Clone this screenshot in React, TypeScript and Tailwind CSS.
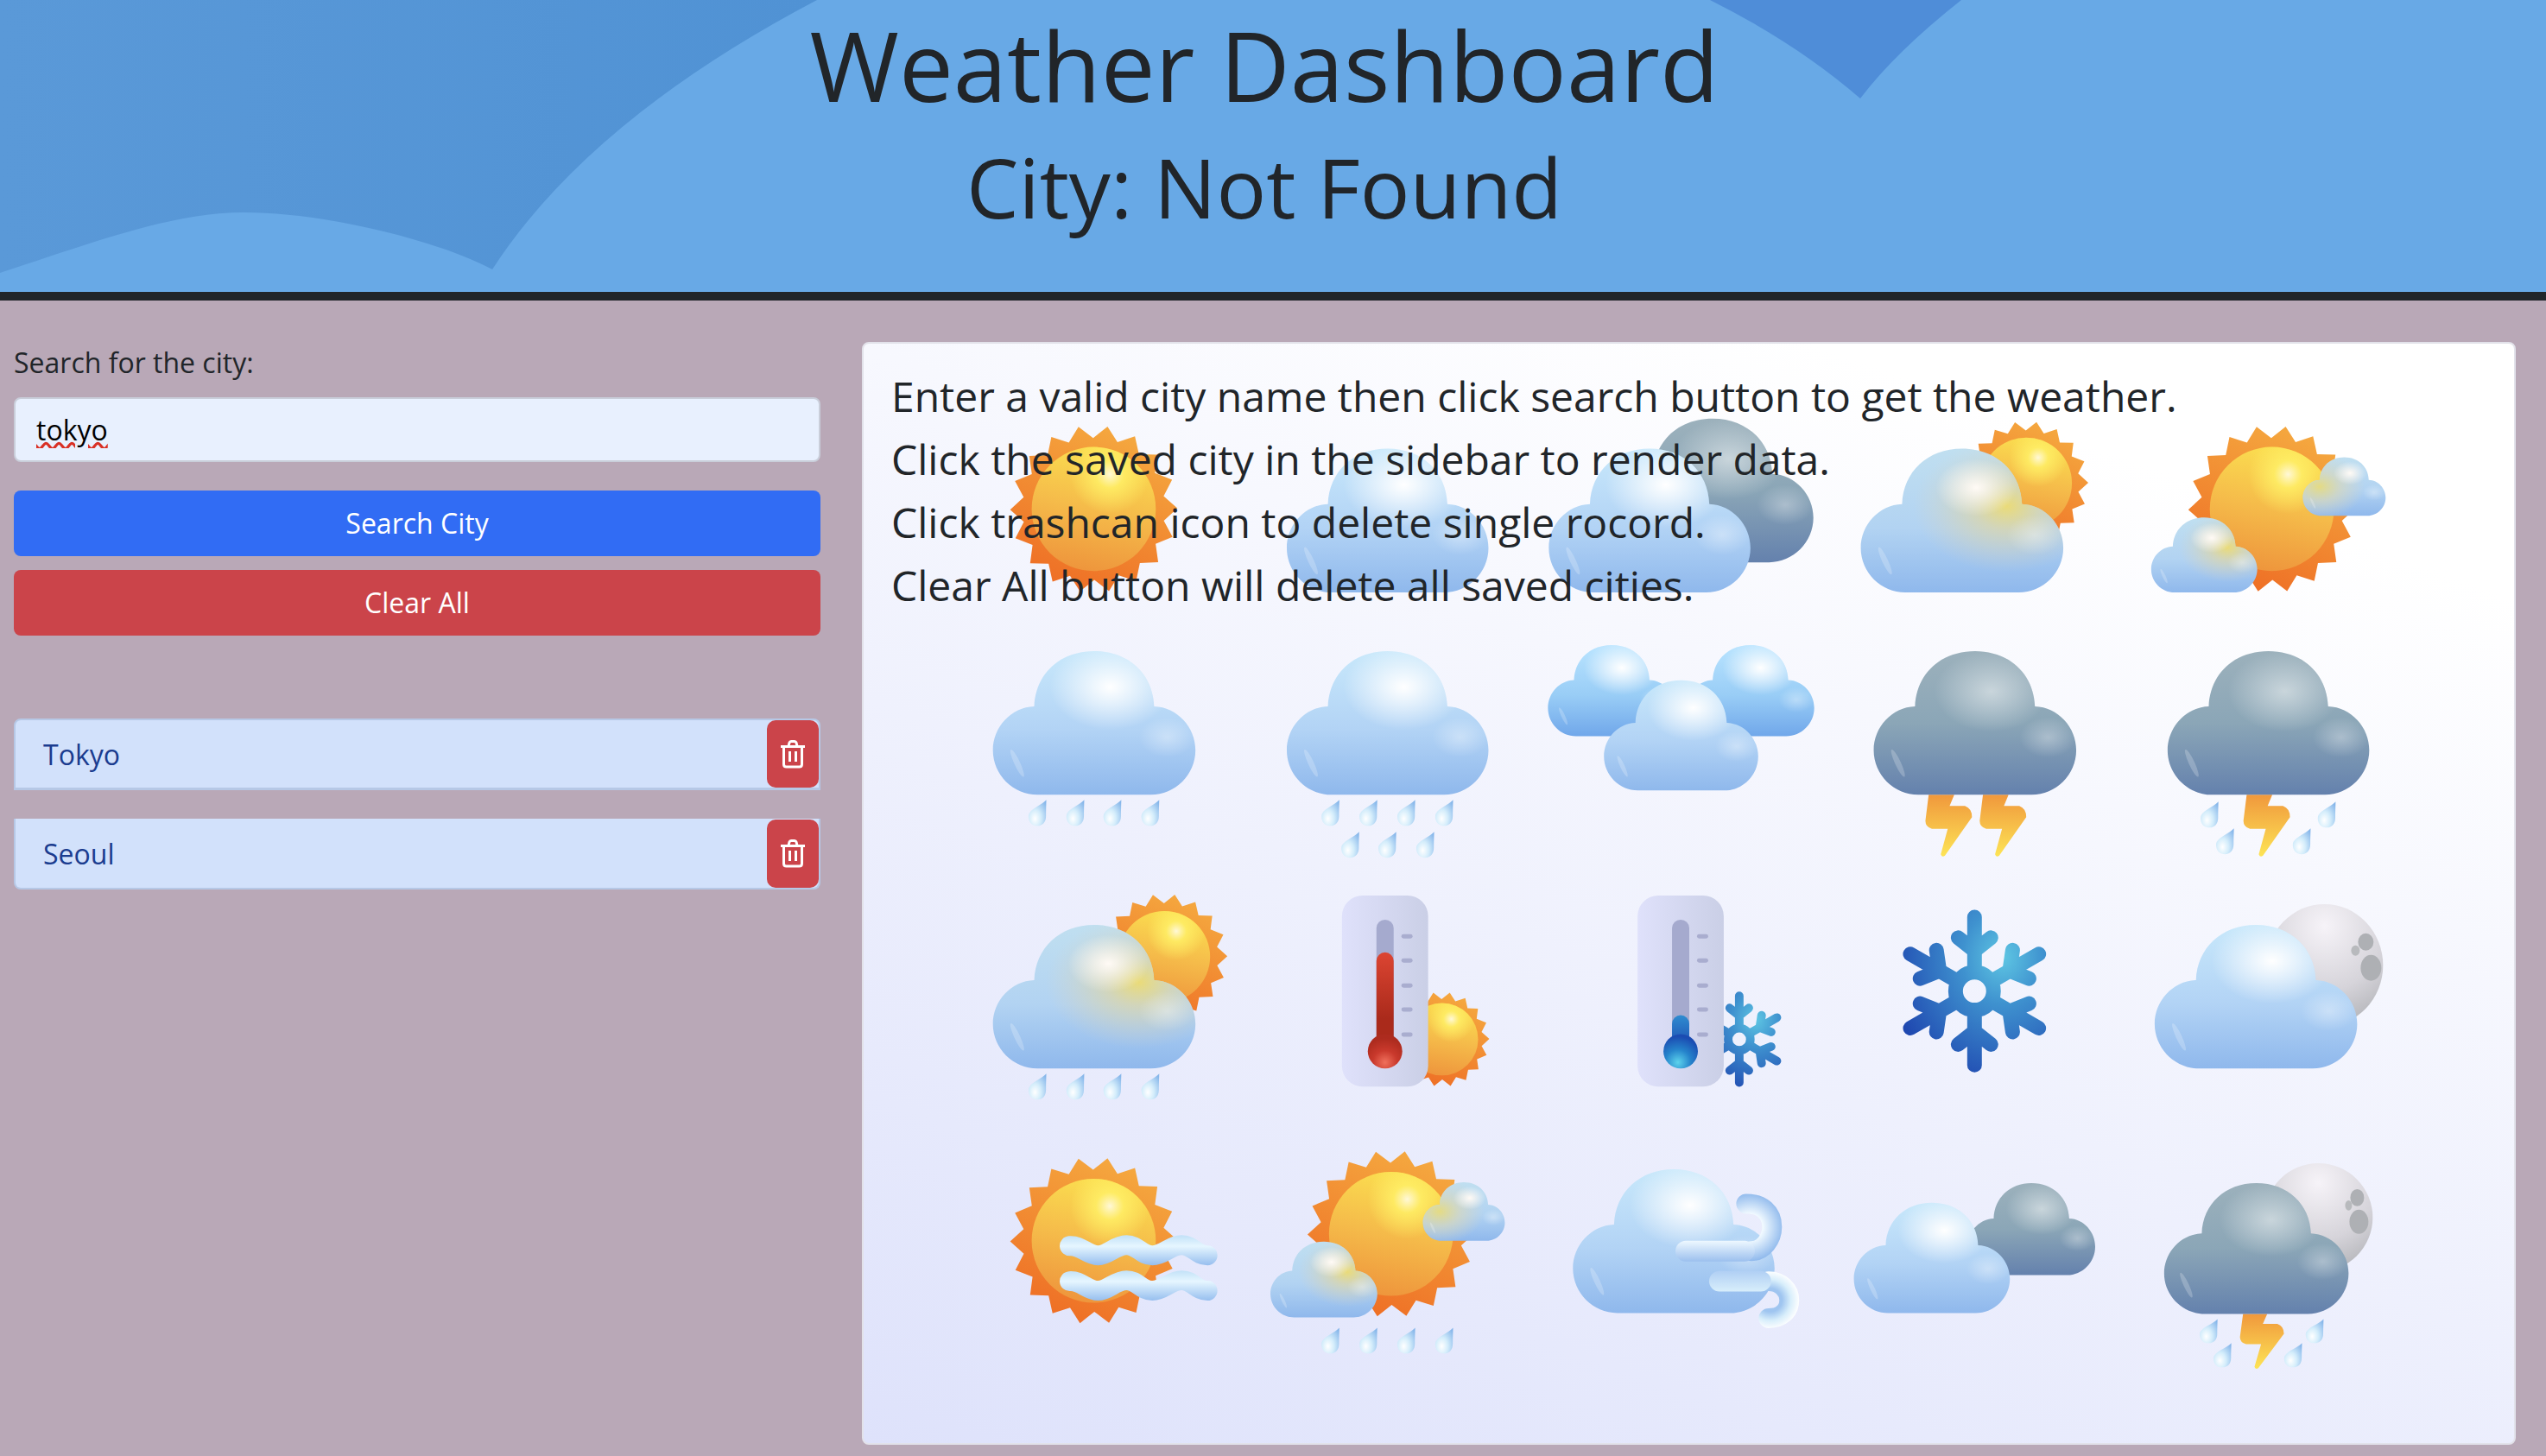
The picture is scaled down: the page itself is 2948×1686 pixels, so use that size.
import React from "react";

const CLOUD =
  "M20.4 38.5C21 16 33 0 50 0C67 0 79 16 79.6 38.5C91 39 100 53 100 69C100 86 90 100 78 100L22 100C10 100 0 86 0 69C0 53 9 39 20.4 38.5Z";
const DROP =
  "M100 0C70 22 25 30 5 52C-3 62 0 100 50 100C80 100 98 85 98 62C98 40 99 20 100 0Z";
const BOLT =
  "M7 0L62 0L52 18L85 18Q100 22 100 36L42 98Q36 102 33 96L48 55L14 55Q0 52 0 42Z";

type CloudKind = "light" | "dark" | "warm" | "warm-left" | "bright";

const Cloud = ({ x, y, w, h, kind = "light" }: { x: number; y: number; w: number; h: number; kind?: CloudKind }) => {
  const isWarm = kind === "warm" || kind === "warm-left";
  return (
    <g transform={`translate(${x} ${y}) scale(${w / 100} ${h / 100})`}>
      <path d={CLOUD} fill={`url(#cloud-${isWarm ? "warm" : kind})`} />
      {kind === "warm" && <path d={CLOUD} fill="url(#warm-tint)" />}
      {kind === "warm-left" && <path d={CLOUD} fill="url(#warm-tint-left)" />}
      <path d={CLOUD} fill={kind === "dark" ? "url(#glow-dark)" : isWarm ? "url(#glow-warm)" : "url(#glow-white)"} />
      <path d={CLOUD} fill={kind === "dark" ? "url(#lobe-dark)" : "url(#lobe-white)"} />
      <ellipse cx="12" cy="78" rx="1.5" ry="10" transform="rotate(-18 12 78)" fill="#ffffff" opacity="0.22" />
    </g>
  );
};

const Drop = ({ x, y, w = 21, h = 30 }: { x: number; y: number; w?: number; h?: number }) => (
  <g transform={`translate(${x} ${y}) scale(${w / 100} ${h / 100})`}>
    <path d={DROP} fill="url(#drop)" />
  </g>
);

const Bolt = ({ x, y, w = 54, h = 72 }: { x: number; y: number; w?: number; h?: number }) => (
  <g transform={`translate(${x} ${y}) scale(${w / 100} ${h / 100})`}>
    <path d={BOLT} fill="url(#bolt)" />
  </g>
);

// spiky ring behind the sun disc
const starPoints = (cx: number, cy: number, R: number, r: number) => {
  const pts: string[] = [];
  for (let i = 0; i < 36; i++) {
    const a = ((i * 10 - 100.5) * Math.PI) / 180;
    const rad = i % 2 === 0 ? R : r;
    pts.push(`${(cx + rad * Math.cos(a)).toFixed(1)},${(cy + rad * Math.sin(a)).toFixed(1)}`);
  }
  return pts.join(" ");
};

const Sun = ({ cx, cy, R, r }: { cx: number; cy: number; R: number; r: number }) => (
  <g>
    <polygon points={starPoints(cx, cy, R, R * 0.85)} fill="url(#sun-rays)" />
    <ellipse cx={cx} cy={cy} rx={r} ry={r} fill="url(#sun-disc)" />
    <ellipse cx={cx} cy={cy} rx={r} ry={r} fill="url(#sun-glow)" />
  </g>
);

const Flake = ({ cx, cy, s }: { cx: number; cy: number; s: number }) => {
  const R = 22 * s;
  let d = `M${cx - R} ${cy}A${R} ${R} 0 1 0 ${cx + R} ${cy}A${R} ${R} 0 1 0 ${cx - R} ${cy}`;
  for (let k = 0; k < 6; k++) {
    const a = (k * Math.PI) / 3;
    const p = (x: number, y: number) =>
      `${(cx + s * (x * Math.cos(a) - y * Math.sin(a))).toFixed(1)} ${(cy + s * (x * Math.sin(a) + y * Math.cos(a))).toFixed(1)}`;
    d += `M${p(0, -24)}L${p(0, -86)}M${p(-19, -62)}L${p(0, -47)}L${p(19, -62)}`;
  }
  return <path d={d} fill="none" stroke="url(#flake)" strokeWidth={17 * s} strokeLinecap="round" strokeLinejoin="round" />;
};

const Thermo = ({ x, hot }: { x: number; hot: boolean }) => (
  <g>
    <rect x={x} y="1037" width="100" height="222" rx="24" fill="url(#panel)" />
    <rect x={x + 40} y="1065" width="20" height="150" rx="10" fill="#a5aace" />
    {[1084, 1112, 1141, 1169, 1198].map((y) => (
      <rect key={y} x={x + 69} y={y - 2} width="13" height="5" rx="2.5" fill="#a9adcf" />
    ))}
    <rect x={x + 40} y={hot ? 1103 : 1176} width="20" height={hot ? 110 : 40} rx="10" fill={hot ? "url(#red-tube)" : "url(#blue-tube)"} />
    <ellipse cx={x + 50} cy="1218" rx="20" ry="20" fill={hot ? "url(#red-bulb)" : "url(#blue-bulb)"} />
  </g>
);

const Moon = ({ cx, cy, rx, ry }: { cx: number; cy: number; rx: number; ry: number }) => (
  <ellipse cx={cx} cy={cy} rx={rx} ry={ry} fill="url(#moon)" />
);

const Wave = ({ dy }: { dy: number }) => (
  <g transform={`translate(0 ${dy})`}>
    <path
      d="M1237 1444C1250 1443 1258 1455 1270 1455C1282 1455 1290 1443 1303 1443C1316 1443 1320 1455 1333 1455C1346 1455 1354 1443 1367 1443C1380 1443 1384 1455 1397 1455"
      fill="none"
      stroke="url(#wave)"
      strokeWidth="23"
      strokeLinecap="round"
    />
  </g>
);

const WeatherArt = () => (
  <svg className="absolute left-0 top-0 h-full w-full" viewBox="998 396 1915 1277" preserveAspectRatio="none">
    <defs>
      <linearGradient id="cloud-light" x1="0" y1="0" x2="0" y2="1">
        <stop offset="0" stopColor="#c8e8fb" />
        <stop offset="0.55" stopColor="#b2d3f5" />
        <stop offset="1" stopColor="#8fb8ec" />
      </linearGradient>
      <linearGradient id="cloud-bright" x1="0" y1="0" x2="0" y2="1">
        <stop offset="0" stopColor="#b9e4ff" />
        <stop offset="0.55" stopColor="#99cdf6" />
        <stop offset="1" stopColor="#70a7ea" />
      </linearGradient>
      <linearGradient id="cloud-dark" x1="0" y1="0" x2="0" y2="1">
        <stop offset="0" stopColor="#9cb1bc" />
        <stop offset="0.5" stopColor="#8ba6b7" />
        <stop offset="1" stopColor="#6481ad" />
      </linearGradient>
      <linearGradient id="cloud-warm" x1="0" y1="0" x2="0" y2="1">
        <stop offset="0" stopColor="#c0dff0" />
        <stop offset="0.55" stopColor="#b2d3f2" />
        <stop offset="1" stopColor="#8fb8ec" />
      </linearGradient>
      <radialGradient id="warm-tint" cx="0.72" cy="0.4" r="0.46">
        <stop offset="0" stopColor="#f7dc5a" stopOpacity="0.8" />
        <stop offset="0.35" stopColor="#dfd6a4" stopOpacity="0.7" />
        <stop offset="1" stopColor="#d8d4c4" stopOpacity="0" />
      </radialGradient>
      <radialGradient id="warm-tint-left" cx="0.2" cy="0.5" r="0.55">
        <stop offset="0" stopColor="#eddc70" stopOpacity="0.85" />
        <stop offset="0.45" stopColor="#d8d8bc" stopOpacity="0.7" />
        <stop offset="1" stopColor="#d8d8c8" stopOpacity="0" />
      </radialGradient>
      <radialGradient id="glow-white" cx="0.58" cy="0.25" r="0.3">
        <stop offset="0" stopColor="#ffffff" stopOpacity="1" />
        <stop offset="1" stopColor="#ffffff" stopOpacity="0" />
      </radialGradient>
      <radialGradient id="glow-warm" cx="0.57" cy="0.27" r="0.2">
        <stop offset="0" stopColor="#fffaf5" stopOpacity="1" />
        <stop offset="1" stopColor="#fffaf5" stopOpacity="0" />
      </radialGradient>
      <radialGradient id="glow-dark" cx="0.58" cy="0.28" r="0.28">
        <stop offset="0" stopColor="#cfdadf" stopOpacity="0.9" />
        <stop offset="1" stopColor="#cfdadf" stopOpacity="0" />
      </radialGradient>
      <radialGradient id="lobe-white" cx="0.86" cy="0.6" r="0.14">
        <stop offset="0" stopColor="#ffffff" stopOpacity="0.35" />
        <stop offset="1" stopColor="#ffffff" stopOpacity="0" />
      </radialGradient>
      <radialGradient id="lobe-dark" cx="0.86" cy="0.6" r="0.14">
        <stop offset="0" stopColor="#c6d2dc" stopOpacity="0.6" />
        <stop offset="1" stopColor="#c6d2dc" stopOpacity="0" />
      </radialGradient>
      <radialGradient id="drop" cx="0.36" cy="0.72" r="0.85">
        <stop offset="0" stopColor="#ffffff" />
        <stop offset="0.4" stopColor="#d4edfb" />
        <stop offset="1" stopColor="#86b6ea" />
      </radialGradient>
      <linearGradient id="bolt" x1="0" y1="0" x2="0" y2="1">
        <stop offset="0" stopColor="#f0983c" />
        <stop offset="1" stopColor="#fde456" />
      </linearGradient>
      <linearGradient id="sun-rays" x1="0.7" y1="0" x2="0.25" y2="1">
        <stop offset="0" stopColor="#f5aa40" />
        <stop offset="1" stopColor="#ee6c24" />
      </linearGradient>
      <linearGradient id="sun-disc" x1="0.6" y1="0" x2="0.4" y2="1">
        <stop offset="0" stopColor="#fbdf50" />
        <stop offset="0.5" stopColor="#f5bb4a" />
        <stop offset="1" stopColor="#ee953c" />
      </linearGradient>
      <radialGradient id="sun-glow" cx="0.63" cy="0.22" r="0.32">
        <stop offset="0" stopColor="#fff8d8" stopOpacity="1" />
        <stop offset="0.35" stopColor="#ffef66" stopOpacity="0.85" />
        <stop offset="1" stopColor="#ffef66" stopOpacity="0" />
      </radialGradient>
      <radialGradient id="flake" cx="0.72" cy="0.27" r="0.9">
        <stop offset="0" stopColor="#5ec6e3" />
        <stop offset="0.35" stopColor="#3f92cf" />
        <stop offset="1" stopColor="#1f48b0" />
      </radialGradient>
      <linearGradient id="panel" x1="0" y1="0" x2="1" y2="0">
        <stop offset="0" stopColor="#dfe1fb" />
        <stop offset="1" stopColor="#cacfe6" />
      </linearGradient>
      <linearGradient id="red-tube" x1="0" y1="0" x2="0" y2="1">
        <stop offset="0" stopColor="#dc4532" />
        <stop offset="0.7" stopColor="#aa2a1b" />
        <stop offset="1" stopColor="#aa2a1b" />
      </linearGradient>
      <linearGradient id="blue-tube" x1="0" y1="0" x2="0" y2="1">
        <stop offset="0" stopColor="#2f8cd0" />
        <stop offset="1" stopColor="#1d49b0" />
      </linearGradient>
      <radialGradient id="red-bulb" cx="0.5" cy="0.82" r="0.7">
        <stop offset="0" stopColor="#f0705c" />
        <stop offset="0.5" stopColor="#c9392c" />
        <stop offset="1" stopColor="#ad2b1e" />
      </radialGradient>
      <radialGradient id="blue-bulb" cx="0.42" cy="0.82" r="0.75">
        <stop offset="0" stopColor="#5cd3ec" />
        <stop offset="0.5" stopColor="#2583cb" />
        <stop offset="1" stopColor="#1b4cb2" />
      </radialGradient>
      <radialGradient id="moon" cx="0.5" cy="0.18" r="0.95">
        <stop offset="0" stopColor="#f6f3f8" />
        <stop offset="0.55" stopColor="#d6d4da" />
        <stop offset="1" stopColor="#a8aaae" />
      </radialGradient>
      <linearGradient id="wave" gradientUnits="userSpaceOnUse" x1="0" y1="1432" x2="0" y2="1467">
        <stop offset="0" stopColor="#c3e2f8" />
        <stop offset="0.35" stopColor="#e6f6ff" />
        <stop offset="1" stopColor="#94bdee" />
      </linearGradient>
      <linearGradient id="gust-bar" x1="0" y1="0" x2="0" y2="1">
        <stop offset="0" stopColor="#eef8ff" />
        <stop offset="1" stopColor="#9cc0ee" />
      </linearGradient>
      <linearGradient id="gust-bar-2" x1="0" y1="0" x2="0" y2="1">
        <stop offset="0" stopColor="#b0cff4" />
        <stop offset="1" stopColor="#d8eefb" />
      </linearGradient>
      <radialGradient id="gust-curl" gradientUnits="userSpaceOnUse" cx="2026" cy="1422" r="39">
        <stop offset="0.4" stopColor="#f0f9ff" />
        <stop offset="1" stopColor="#92bbed" />
      </radialGradient>
      <radialGradient id="gust-curl-2" gradientUnits="userSpaceOnUse" cx="2050" cy="1507" r="34">
        <stop offset="0.4" stopColor="#9fc5f0" />
        <stop offset="0.7" stopColor="#d8eefb" />
        <stop offset="1" stopColor="#ffffff" />
      </radialGradient>
    </defs>

    {/* row 1 */}
    <Sun cx={1265} cy={588} R={97} r={72} />
    <Cloud x={1489} y={518} w={234} h={167} />
    <Cloud x={1866} y={483} w={234} h={167} kind="dark" />
    <Cloud x={1793} y={518} w={234} h={167} />
    <Sun cx={2347} cy={558} R={72} r={53} />
    <Cloud x={2155} y={518} w={235} h={167} kind="warm" />
    <Sun cx={2632} cy={588} R={97} r={72} />
    <Cloud x={2492} y={598} w={123} h={87} kind="warm" />
    <Cloud x={2668} y={528} w={96} h={68} kind="warm-left" />

    {/* row 2 */}
    <Cloud x={1148} y={753} w={235} h={167} />
    {[1189, 1233, 1276, 1320].map((x) => (
      <Drop key={x} x={x} y={926} />
    ))}
    <Cloud x={1489} y={753} w={234} h={167} />
    {[1529, 1573, 1617, 1661].map((x) => (
      <Drop key={x} x={x} y={926} />
    ))}
    {[1552, 1595, 1639].map((x) => (
      <Drop key={x} x={x} y={963} />
    ))}
    <Cloud x={1792} y={746} w={148} h={106} kind="bright" />
    <Cloud x={1953} y={746} w={148} h={106} kind="bright" />
    <Cloud x={1857} y={787} w={179} h={128} />
    <Bolt x={2230} y={920} />
    <Bolt x={2293} y={920} />
    <Cloud x={2170} y={753} w={235} h={167} kind="dark" />
    <Bolt x={2599} y={920} />
    <Drop x={2549} y={928} />
    <Drop x={2685} y={928} />
    <Drop x={2567} y={959} />
    <Drop x={2656} y={959} />
    <Cloud x={2511} y={753} w={234} h={167} kind="dark" />

    {/* row 3 */}
    <Sun cx={1347} cy={1108} R={73} r={53} />
    <Cloud x={1148} y={1071} w={235} h={167} kind="warm" />
    {[1189, 1233, 1276, 1320].map((x) => (
      <Drop key={x} x={x} y={1244} />
    ))}
    <Sun cx={1669} cy={1204} R={55} r={42} />
    <Thermo x={1553} hot />
    <Flake cx={2014} cy={1204} s={0.585} />
    <Thermo x={1896} hot={false} />
    <Flake cx={2287} cy={1148} s={1} />
    <Moon cx={2693} cy={1118} rx={68} ry={71} />
    <ellipse cx={2741} cy={1091} rx={9} ry={10} fill="#aeb0b4" />
    <ellipse cx={2747} cy={1121} rx={12} ry={15} fill="#aeb0b4" />
    <ellipse cx={2729} cy={1101} rx={5} ry={6} fill="#b8babd" />
    <Cloud x={2496} y={1071} w={235} h={167} />

    {/* row 4 */}
    <Sun cx={1265} cy={1438} R={97} r={72} />
    <Wave dy={0} />
    <Wave dy={41} />
    <Sun cx={1610} cy={1430} R={97} r={72} />
    <Cloud x={1470} y={1439} w={124} h={88} kind="warm" />
    <Cloud x={1647} y={1370} w={95} h={68} kind="warm-left" />
    {[1529, 1573, 1617, 1661].map((x) => (
      <Drop key={x} x={x} y={1539} />
    ))}
    <Cloud x={1821} y={1355} w={234} h={167} />
    <path d="M2028 1450C2042 1450 2052 1436 2052 1422C2052 1405 2040 1395 2022 1395" fill="none" stroke="url(#gust-curl)" strokeWidth="23" strokeLinecap="round" />
    <rect x="1940" y="1438" width="92" height="24" rx="12" fill="url(#gust-bar)" />
    <path d="M2048 1485C2062 1485 2072 1495 2072 1507C2072 1520 2062 1528 2048 1528" fill="none" stroke="url(#gust-curl-2)" strokeWidth="23" strokeLinecap="round" />
    <rect x="1979" y="1473" width="72" height="24" rx="12" fill="url(#gust-bar-2)" />
    <Cloud x={2279} y={1371} w={148} h={107} kind="dark" />
    <Cloud x={2147} y={1394} w={181} h={128} />
    <Moon cx={2686} cy={1411} rx={63} ry={63} />
    <ellipse cx={2731} cy={1388} rx={8} ry={10} fill="#aeb0b4" />
    <ellipse cx={2733} cy={1416} rx={11} ry={14} fill="#aeb0b4" />
    <ellipse cx={2721} cy={1397} rx={4} ry={6} fill="#b8babd" />
    <Bolt x={2595} y={1523} w={51} h={64} />
    <Drop x={2548} y={1529} h={28} />
    <Drop x={2671} y={1529} h={28} />
    <Drop x={2564} y={1557} h={28} />
    <Drop x={2646} y={1557} h={28} />
    <Cloud x={2507} y={1371} w={214} h={152} kind="dark" />
  </svg>
);

const TrashIcon = () => (
  <svg width="30" height="33" viewBox="0 0 30 33" fill="none" stroke="#ffffff" strokeWidth="3">
    <path d="M1 7.5L29 7.5" />
    <path d="M10 7L11 3Q11.5 1.5 13 1.5L17 1.5Q18.5 1.5 19 3L20 7" />
    <path d="M4.5 7.5L4.5 28Q4.5 31 7.5 31L22.5 31Q25.5 31 25.5 28L25.5 7.5" />
    <path d="M11.5 13L11.5 25M18.5 13L18.5 25" />
  </svg>
);

const App: React.FC = () => {
  return (
    <div className="min-h-screen bg-[#b9a8b7] pr-5 font-['Open_Sans',sans-serif] text-[32px] leading-normal text-[#212529]">
      <header className="relative -mr-5 h-[348px] border-b-[10px] border-[#212529] bg-[#68a9e6] pr-5 pt-2 text-center">
        <svg className="absolute left-0 top-0 h-[338px] w-[2948px]" viewBox="0 0 2948 338">
          <defs>
            <linearGradient id="hdr" x1="0" y1="0" x2="1" y2="0">
              <stop offset="0" stopColor="#5a99d8" />
              <stop offset="1" stopColor="#5092d4" />
            </linearGradient>
          </defs>
          <path d="M0 0L946 0Q682 139 570 312C510 280 380 246 282 246C200 246 110 280 0 316Z" fill="url(#hdr)" />
          <path d="M1980 0L2271 0Q2195 60 2154 114Q2080 50 1980 0Z" fill="#4f8dd8" />
        </svg>
        <h1 className="relative mb-4 text-[112px] font-normal leading-[1.2]">Weather Dashboard</h1>
        <h2 className="relative text-[96px] font-normal leading-[1.2]">City: Not Found</h2>
      </header>

      <main className="flex gap-12 pl-4 pt-12">
        <aside className="w-[934px] shrink-0">
          <label className="mb-4 block">Search for the city:</label>
          <input
            defaultValue="tokyo"
            spellCheck={false}
            className="mb-[33px] block h-[75px] w-full rounded-lg border-2 border-[#c9ceda] bg-[#e8f0fe] px-[24px] text-black underline decoration-[#d93025] decoration-wavy outline-none"
          />
          <button className="mb-4 block h-[76px] w-full rounded-lg bg-[#316cf4] text-white">Search City</button>
          <button className="mb-24 block h-[76px] w-full rounded-lg bg-[#cb444a] text-white">Clear All</button>
          <div className="flex flex-col gap-[33px]">
            <div className="flex h-[83px] items-center rounded-t-lg border-2 border-b-[3px] border-[#b6c8e6] bg-[#d2e1fb]">
              <span className="flex-1 pl-[32px] pt-[2px] text-[#1b3c8f]">Tokyo</span>
              <button className="flex h-[78px] w-[60px] items-center justify-center rounded-[10px] bg-[#cb444a]">
                <TrashIcon />
              </button>
            </div>
            <div className="flex h-[82px] items-center rounded-b-lg border-2 border-t-0 border-[#b6c8e6] bg-[#d2e1fb]">
              <span className="flex-1 pl-[32px] pt-[2px] text-[#1b3c8f]">Seoul</span>
              <button className="flex h-[79px] w-[60px] items-center justify-center rounded-[10px] bg-[#cb444a]">
                <TrashIcon />
              </button>
            </div>
          </div>
        </aside>

        <section className="relative h-[1277px] w-[1915px] overflow-hidden rounded-lg border-2 border-[#e2e2ea] bg-[linear-gradient(20deg,#dee2fb,#ffffff_85%)]">
          <WeatherArt />
          <div className="relative px-[32px] pt-[24px] text-[48px] leading-[73px]">
            <p>Enter a valid city name then click search button to get the weather.</p>
            <p>Click the saved city in the sidebar to render data.</p>
            <p>Click trashcan icon to delete single rocord.</p>
            <p>Clear All button will delete all saved cities.</p>
          </div>
        </section>
      </main>
    </div>
  );
};

export default App;
